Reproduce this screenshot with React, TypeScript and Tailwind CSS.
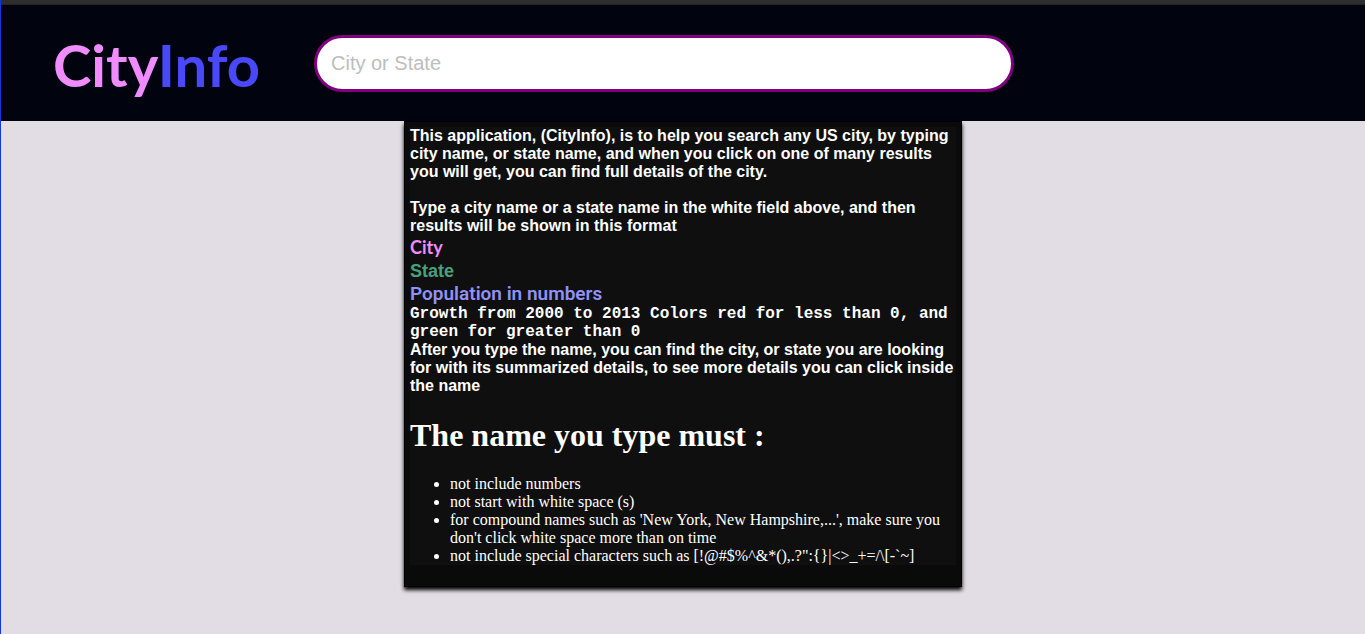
import { useState } from "react";

const rules = [
  "not include numbers",
  "not start with white space (s)",
  "for compound names such as 'New York, New Hampshire,...', make sure you don't click white space more than on time",
  "not include special characters such as [!@#$%^&*(),.?\":{}|<>_+=/\\[-`~]",
];

function Header() {
  const [query, setQuery] = useState("");
  return (
    <header className="flex h-[116px] items-center bg-[#01030e] pl-[52px]">
      <a
        href="#"
        aria-label="CityInfo"
        className="w-[261px] shrink-0 pt-1 font-['Lato','Noto_Sans',sans-serif] text-[58px] leading-[72px] font-bold text-[#f08cff]"
      >
        City<span className="text-[#4a48fb]">Info</span>
      </a>
      <input
        type="text"
        aria-label="City or State"
        placeholder="City or State"
        value={query}
        onChange={(e) => setQuery(e.target.value)}
        className="h-[57px] w-full max-w-[700px] min-w-0 rounded-full border-3 border-[#800080] bg-white px-3.5 text-xl text-black outline-none placeholder:text-[#bdbdbd]"
      />
    </header>
  );
}

function Instructions() {
  return (
    <section className="w-full max-w-[558px] border border-black bg-[#0a0a0a] px-[5px] pt-[5px] pb-[21px] text-white shadow-[0_3px_4px_black]">
      <div className="bg-[#0f0f0f] text-base leading-[18px]">
        <div className="font-bold">
          <p>
            This application, (CityInfo), is to help you search any US city, by typing city name, or
            state name, and when you click on one of many results you will get, you can find full
            details of the city.
          </p>
          <p className="mt-[18px]">
            Type a city name or a state name in the white field above, and then results will be shown
            in this format
          </p>
          <p className="font-['Lato','Noto_Sans',sans-serif] text-lg leading-[25px] text-[#f08cff]">
            City
          </p>
          <p className="text-lg leading-[22px] text-[#4aa07c]">State</p>
          <p className="font-['Roboto',sans-serif] text-[19px] leading-[23px] font-semibold text-[#9191fa]">
            Population in numbers
          </p>
          <p className="font-['Liberation_Mono',monospace]">
            Growth from 2000 to 2013 Colors red for less than 0, and green for greater than 0
          </p>
          <p>
            After you type the name, you can find the city, or state you are looking for with its
            summarized details, to see more details you can click inside the name
          </p>
        </div>
        <div className="font-['Liberation_Serif',serif]">
          <h1 className="mt-[22px] mb-[21px] text-[32px] leading-[37px] font-bold">
            The name you type must :
          </h1>
          <ul className="list-disc pl-10">
            {rules.map((rule) => (
              <li key={rule}>{rule}</li>
            ))}
          </ul>
        </div>
      </div>
    </section>
  );
}

export default function App() {
  return (
    <div className="min-h-screen border-l border-[#1238dc] bg-[#e2dde4] font-['Liberation_Sans',sans-serif]">
      <div className="h-[5px] border-b border-[#242424] bg-[#2e2e2e]" />
      <Header />
      <main className="flex justify-center">
        <Instructions />
      </main>
    </div>
  );
}
